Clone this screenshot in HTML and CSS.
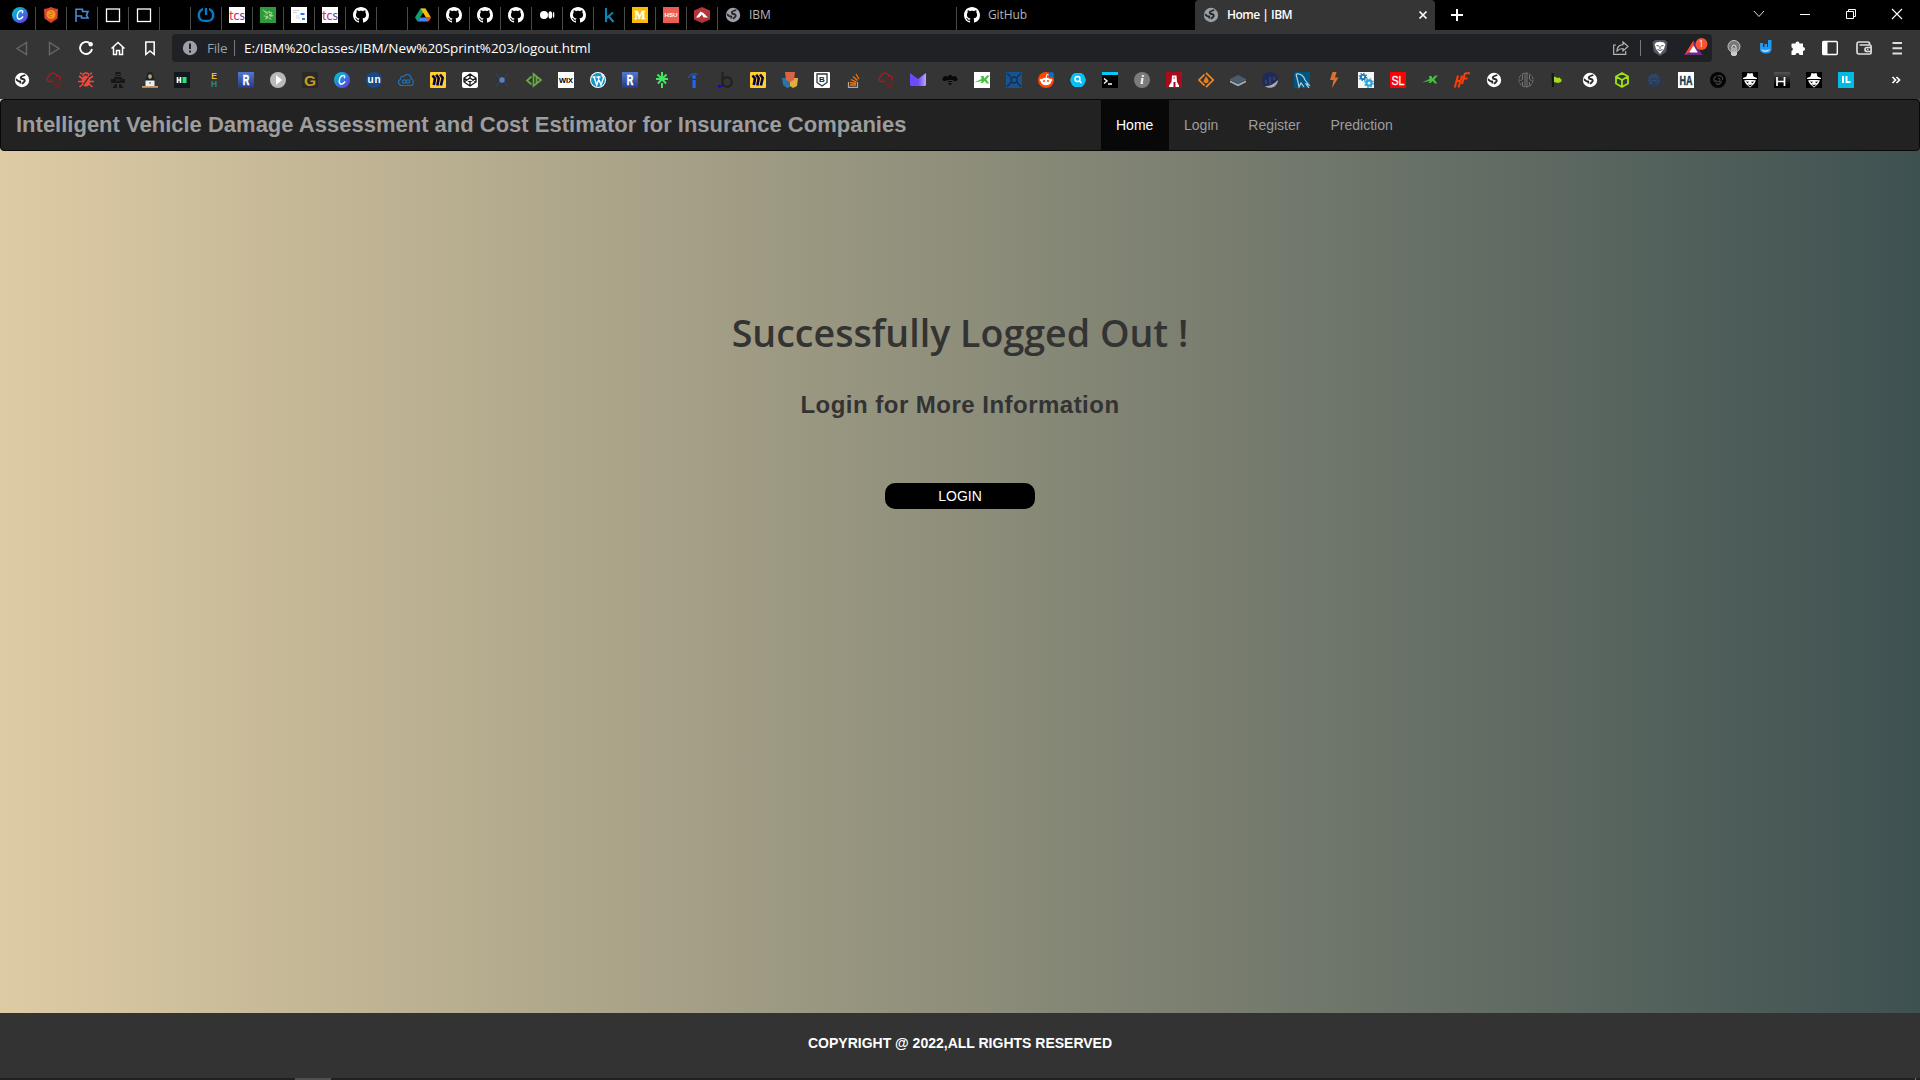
FILE: index.html
```html
<!DOCTYPE html>
<html lang="en">
<head>
<meta charset="utf-8">
<title>Home | IBM</title>
<link rel="stylesheet" href="styles.css">
</head>
<body>
<svg class="defs" aria-hidden="true">
  <defs>
    <linearGradient id="canva-g" x1="0" y1="0" x2="1" y2="1"><stop offset="0.1" stop-color="#00c4cc"/><stop offset="0.5" stop-color="#2b7de0"/><stop offset="1" stop-color="#7d2ae8"/></linearGradient>
    <linearGradient id="purple-g" x1="0" y1="0" x2="1" y2="0"><stop offset="0.5" stop-color="#6d4aff"/><stop offset="1" stop-color="#b9a6ff"/></linearGradient>
    <linearGradient id="h-g" x1="0" y1="0" x2="0" y2="1"><stop offset="0" stop-color="#555"/><stop offset="0.8" stop-color="#000"/></linearGradient>
    <linearGradient id="r-g" x1="0" y1="0" x2="0" y2="1"><stop offset="0" stop-color="#5277d0"/><stop offset="1" stop-color="#263a80"/></linearGradient>
    <symbol id="canva" viewBox="0 0 16 16"><circle cx="8" cy="8" r="8" fill="url(#canva-g)"/><path d="M10.400 5.600c.8-1.400-.2-2.400-1.500-2-2 .5-3.600 3-3.600 5.400 0 2.300 1 3.300 2.400 3.100 1.300-.1 2.400-1.100 3-2.200" fill="none" stroke="#fff" stroke-width="1.500" stroke-linecap="round"/></symbol>
    <symbol id="github" viewBox="0 0 16 16"><path fill="#fff" d="M8 0C3.580 0 0 3.580 0 8c0 3.540 2.290 6.530 5.470 7.590.4.070.55-.17.55-.38 0-.19-.01-.82-.01-1.490-2.010.37-2.530-.49-2.690-.94-.09-.23-.48-.94-.82-1.130-.28-.15-.68-.52-.01-.53.63-.01 1.080.58 1.230.82.72 1.210 1.870.87 2.330.66.070-.52.28-.87.51-1.070-1.780-.2-3.640-.89-3.640-3.950 0-.87.31-1.590.82-2.150-.08-.2-.36-1.020.08-2.120 0 0 .67-.21 2.200.82.64-.18 1.320-.27 2-.27s1.360.09 2 .27c1.530-1.040 2.200-.82 2.200-.82.44 1.100.16 1.920.08 2.120.51.56.82 1.270.82 2.150 0 3.070-1.870 3.750-3.650 3.950.29.25.54.73.54 1.480 0 1.070-.01 1.930-.01 2.200 0 .21.15.46.55.38A8.010 8.010 0 0 0 16 8c0-4.420-3.580-8-8-8z"/></symbol>
    <symbol id="globe" viewBox="0 0 16 16"><circle cx="8" cy="8" r="7.200" fill="currentColor"/><path d="M11.300 3 8.500 4C6 4.800 6.200 6.600 8.500 7s3 1.800 1.500 3l-2 1.800M2 7.300l2.300 1.900 2 .3v2" class="cut" fill="none" stroke-width="1.800"/></symbol>
    <symbol id="square" viewBox="0 0 16 16"><rect x="1.500" y="2" width="13" height="12.500" fill="none" stroke="#fff" stroke-width="1.300"/></symbol>
    <symbol id="tcs" viewBox="0 0 16 16"><path d="M0 0h16v16H0z" fill="#fff"/><text x="0" y="12.500" font-size="13" font-weight="400" textLength="16" lengthAdjust="spacingAndGlyphs" class="lato"><tspan fill="#e5352b">t</tspan><tspan fill="#c1268e">c</tspan><tspan fill="#713f98">s</tspan></text></symbol>
    <symbol id="redcloud" viewBox="0 0 16 16"><path d="M7 9.500H3A2.600 2.600 0 0 1 3 4.500C4 .5 9.500-.3 11 4c3-.5 4.500 2.500 2.500 4" fill="none" stroke="#c01217" stroke-width="1.300"/><path d="M8.500 7h3m1 2h2.500M7.500 12h3m1 0h3.500M10 14.500h4" fill="none" stroke="#8c1b1e"/></symbol>
    <symbol id="rbook" viewBox="0 0 16 16"><path d="M0 0h16v16H0z" fill="url(#r-g)"/><text x="8" y="13" font-size="14" font-weight="700" fill="#fff" stroke="#fff" stroke-width=".6" text-anchor="middle" textLength="6.500" lengthAdjust="spacingAndGlyphs">R</text></symbol>
    <symbol id="miro" viewBox="0 0 16 16"><rect width="16" height="16" rx="1" fill="#ffd02f"/><path d="M2.500 3.500 5 6.500 3.800 13M6.200 2.700 8.700 6.300 7.300 13.500M10 2.500 12.700 5.800 10.900 13.500" fill="none" stroke="#050038" stroke-width="2.600"/></symbol>
    <symbol id="spy" viewBox="0 0 16 16"><path d="M0 0h16v16H0z" fill="#000"/><path d="M5.500 1 8 1.500 10.500 1l1 3.500L15 6v1H1V6l3.500-1.500z" fill="#fff"/><path d="M2 8.500 5 8h6l3 .5-2 3.500-4 3.500L4 12z" fill="#fff"/><path d="m4 9.500 3 .3-1.300 1.400zm8 0-3 .3 1.300 1.400zM5.500 12.300 8 13l2.500-.7L8 14.500z" fill="#000"/></symbol>
    <symbol id="kfig" viewBox="0 0 16 16"><path d="M0 10.500 7.500 7l-.5-3h2.700l.5 2.500L13 3.500h2.800l-3.500 4 3 4h-2.600l-2-2.500-2 2H6.500L8 9z" fill="currentColor"/></symbol>
  </defs>
</svg>

<header class="browser">
  <div class="tabs">
    <div class="pin"><svg><use href="#canva"/></svg></div>
    <div class="pin"><svg viewBox="0 0 16 16"><path d="m8 0 3 1.200L15 2l-.5 9.500L8 16l-6.500-4.500L1 2l4-.8z" fill="#d9442d"/><circle cx="8" cy="7.500" r="4.500" fill="#f4971e"/><path d="M7 4.500c3 0 3 3 0 3s-1 3 2 2.500" fill="none" stroke="#d9652d"/></svg></div>
    <div class="pin"><svg viewBox="0 0 16 16"><path d="M2 15V2.200h6.500V4.500H14L12.500 8l1.500 3H7.500V9H2" fill="none" stroke="#478bdc" stroke-width="1.600"/></svg></div>
    <div class="pin"><svg><use href="#square"/></svg></div>
    <div class="pin"><svg><use href="#square"/></svg></div>
    <div class="pin"></div>
    <div class="pin"><svg viewBox="0 0 16 16"><path d="M5 2.200H4.500A6.500 6.500 0 0 0 3 13c1.500 1.300 8.500 1.300 10 0a6.500 6.500 0 0 0-1.500-10.800H11M8 1v7" fill="none" stroke="#0878c9" stroke-width="2.300"/></svg></div>
    <div class="pin"><svg><use href="#tcs"/></svg></div>
    <div class="pin"><svg viewBox="0 0 16 16"><path d="M0 0h16v16H0z" fill="#2e9a38"/><path d="m2 2 5 3 2-1 4 2-2 1 3 2-4 1 2 3-4-2-3 2 1-3-3-1 3-1z" fill="#a4d59c"/><path d="m3 4 8 7M5 9l6-3M8 5l1 6" stroke="#2e9a38"/></svg></div>
    <div class="pin"><svg viewBox="0 0 16 16"><path d="M0 0h16v16H0z" fill="#fff"/><path d="M2 3.500h6M2 5.500h4M5 11h4M5 9h3" stroke="#ccd3df"/><path d="M9.500 7h4M11 12h3" stroke="#2676ee" stroke-width="2"/></svg></div>
    <div class="pin"><svg><use href="#tcs"/></svg></div>
    <div class="pin"><svg><use href="#github"/></svg></div>
    <div class="pin"></div>
    <div class="pin"><svg viewBox="0 0 16 16"><path d="M5.500 1.500h5L8 6 2.500 14.500 0 10.500z" fill="#12a160"/><path d="M5.500 1.500h5l5.500 9h-5z" fill="#fbbc05"/><path d="M5 10.500h11l-2.500 4h-11z" fill="#4285f4"/><path d="M11 10.500h5l-2.500 4z" fill="#ea4335"/></svg></div>
    <div class="pin"><svg><use href="#github"/></svg></div>
    <div class="pin"><svg><use href="#github"/></svg></div>
    <div class="pin"><svg><use href="#github"/></svg></div>
    <div class="pin"><svg viewBox="0 0 16 16"><circle cx="5" cy="8" r="4" fill="#fff"/><ellipse cx="11.300" cy="8" rx="1.900" ry="3.800" fill="#fff"/><ellipse cx="14.600" cy="8" rx=".7" ry="3.300" fill="#fff"/></svg></div>
    <div class="pin"><svg><use href="#github"/></svg></div>
    <div class="pin"><svg viewBox="0 0 16 16"><path d="M5 1v14M12 5.500 5.500 11M7.500 9l5 6" fill="none" stroke="#0a86b4" stroke-width="2.100"/></svg></div>
    <div class="pin"><svg viewBox="0 0 16 16"><path d="M0 0h16v16H0z" fill="#fbbc04"/><text x="8" y="12.300" font-size="13" font-weight="700" fill="#fff" stroke="#fff" stroke-width=".4" text-anchor="middle" textLength="11" lengthAdjust="spacingAndGlyphs" class="serif">M</text></svg></div>
    <div class="pin"><svg viewBox="0 0 16 16"><path d="M0 0h16v16H0z" fill="#ec5e55"/><text x="8" y="10.300" font-size="6.200" font-weight="700" fill="#fff" text-anchor="middle" textLength="13">HSU</text></svg></div>
    <div class="pin"><svg viewBox="0 0 16 16"><path d="m8 0 8 3.500v9L8 16l-8-3.500v-9z" fill="#b4343a"/><path d="m2 10.500 4.500-6 3 1.500 4.500 4.500H9.500L8 7.500l-3 3z" fill="#fff"/></svg></div>
    <div class="tab"><svg class="fav grey"><use href="#globe"/></svg><span>IBM</span></div>
    <div class="tab github-tab"><svg class="fav"><use href="#github"/></svg><span>GitHub</span></div>
    <div class="tab active"><svg class="fav grey"><use href="#globe"/></svg><span>Home | IBM</span><svg class="close" viewBox="0 0 10 10"><path d="m1.500 1.500 7 7m0-7-7 7" stroke="#fff" stroke-width="1.700"/></svg></div>
    <svg class="plus" viewBox="0 0 12 12"><path d="M6 0v12M0 6h12" stroke="#fff" stroke-width="2"/></svg>
    <div class="window">
      <svg viewBox="0 0 46 30"><path d="m18 11 5 5.500 5-5.500" fill="none" stroke="#ddd"/></svg>
      <svg viewBox="0 0 46 30"><path d="M18 14.500h10" stroke="#fff"/></svg>
      <svg viewBox="0 0 46 30"><path d="M18.500 11.500h7v7h-7zM20.500 11V9.500h7v7H26" fill="none" stroke="#fff"/></svg>
      <svg viewBox="0 0 46 30"><path d="m18 9 10 10m0-10L18 19" stroke="#fff" stroke-width="1.100"/></svg>
    </div>
  </div>

  <div class="toolbar">
    <div class="nav-buttons">
      <svg viewBox="0 0 16 16"><path d="M12.500 2.500v12L3 8.500z" fill="none" stroke="#66676d" stroke-width="1.400"/></svg>
      <svg viewBox="0 0 16 16"><path d="M3.500 2.500v12l9.500-6z" fill="none" stroke="#66676d" stroke-width="1.400"/></svg>
      <svg viewBox="0 0 16 16"><path d="M11.500 3A6 6 0 1 0 14 9" fill="none" stroke="#fff" stroke-width="1.900"/><circle cx="12.700" cy="4.200" r="2.200" fill="#fff"/></svg>
      <svg viewBox="0 0 16 16"><path d="m1.500 8.500 6.500-6 6.500 6M3.500 7v7.500h3v-4h3v4h3V7" fill="none" stroke="#fff" stroke-width="1.500"/></svg>
      <svg viewBox="0 0 16 16"><path d="M3.800 2h8.400v12.500L8 11l-4.200 3.500z" fill="none" stroke="#fff" stroke-width="1.500"/></svg>
    </div>
    <div class="address">
      <svg class="info" viewBox="0 0 16 16"><circle cx="8" cy="8" r="7.200" fill="#9aa0a6"/><path d="M8 3.500v5.500M8 10.500v2" stroke="#202124" stroke-width="2"/></svg>
      <span class="scheme">File</span><span class="bar"></span>
      <span class="url">E:/IBM%20classes/IBM/New%20Sprint%203/logout.html</span>
      <svg class="share" viewBox="0 0 16 16"><path d="M3 5H.7v9.300h12V11M10 2l5 4.500-5 4.500V8.500c-3 0-4.500.8-6 2.500 0-4 2.500-6 6-6.300z" fill="none" stroke="#b5b6b8" stroke-width="1.200"/></svg>
      <span class="bar"></span>
      <svg class="lion" viewBox="0 0 16 16"><path d="M3.500 0h9L15.500 2l-1.300 10L8 16l-6.200-4L.5 2z" fill="#565665"/><path d="m4 2.500 4-.7 4 .7 1.300 2-1.300 4.500L8 14 4 9 2.700 4.500z" fill="#fff"/><path d="M4.500 5.500 7 6M11.500 5.500 9 6M8 6v3M5.500 9.500 8 10.500l2.500-1" fill="none" stroke="#565665"/></svg>
      <svg class="bat" viewBox="0 0 24 18"><path d="M9.500 2.500 18.500 17H.5z" fill="#6a2b87"/><path d="M9.500 2.500V8L5.500 14 .5 17z" fill="#ff4724"/><path d="m9.500 7.500 4.300 7h-8.600z" fill="#fff"/><circle cx="17.500" cy="6" r="6" fill="#fb542b"/><text x="17.300" y="9" font-size="8.500" fill="#fff" text-anchor="middle">1</text></svg>
    </div>
    <div class="extensions">
      <svg viewBox="0 0 16 16"><circle cx="8" cy="6.500" r="6" fill="#777" stroke="#c4c4c4"/><path d="M6 12V7a2 2 0 0 1 4 0v5M8 8v4" fill="none" stroke="#ddd"/><path d="M5 12h6v2.500L9.500 16h-3L5 14.500z" fill="#ccc"/></svg>
      <svg viewBox="0 0 16 16"><path d="M2 3h3v4h1.500V4H9v3h1V0h3.500v9c0 3-2 4.500-5.500 4.500S2 12 2 9z" fill="#2497ef"/><path d="M3 9c2 1.500 7 1.500 9 0-1 4-8 4-9 0z" fill="#a5ddff"/></svg>
      <svg viewBox="0 0 16 16"><path d="M2 3.500h3.500a2 2 0 1 1 4 0H13V7a2 2 0 1 1 0 4v4H9.500a2 2 0 0 0-4 0H1.500v-4a2 2 0 0 0 0-3.800V4z" fill="#fff"/></svg>
      <svg viewBox="0 0 16 16"><rect x=".7" y="1.500" width="14.600" height="13" rx="1" fill="none" stroke="#fff" stroke-width="1.400"/><path d="M1 2h4.500v12H1z" fill="#fff"/></svg>
      <svg class="wallet" viewBox="0 0 16 16"><path d="M13.500 5V3.200C13.500 2.500 13 2 12 2H2.500A1.700 1.700 0 0 0 1 3.700v8.600A1.700 1.700 0 0 0 2.500 14h11.300a1.300 1.300 0 0 0 1.300-1.300V6.500A1.300 1.300 0 0 0 13.800 5H3.500M15 7.500h-4a2 2 0 0 0 0 4h4" fill="none" stroke="#ddd" stroke-width="1.700"/><path d="M11 9.500h1.500" stroke="#ddd" stroke-width="1.500"/></svg>
      <svg viewBox="0 0 16 16"><path d="M3.500 3h9.500M3.500 8.200h9.500M3.500 13.500h9.500" stroke="#ddd" stroke-width="1.900"/></svg>
    </div>
  </div>

  <div class="bookmarks">
    <svg class="white"><use href="#globe"/></svg>
    <svg><use href="#redcloud"/></svg>
    <svg viewBox="0 0 16 16"><ellipse cx="8" cy="9" rx="4.300" ry="5.500" fill="#f0483e"/><path d="M5 4a3 3 0 0 1 6 0M0 9.500h16M1 4l4 3M15 4l-4 3M1.500 15l3.500-3M14.500 15 11 12M4 2 2 1M12 2l2-1" fill="none" stroke="#f0483e" stroke-width="1.600"/><path d="m5.500 12.500 5-7" stroke="#353535" stroke-width="1.300"/></svg>
    <svg viewBox="0 0 16 16"><path d="M5.500 0h5v4h-5zM4 5h8v6H4zM1 7h3v4H1zM12 7h3v4h-3zM5 12h2v4H2.500zM9 12h2l2.500 4H9z" fill="#171717"/><path d="M6 2.500h4M5.500 8h5M0 12h3m10 0h3" stroke="#333"/></svg>
    <svg viewBox="0 0 16 16"><path d="M5 3c0-4 6-4 6 0l2 6H3z" fill="#11252f"/><ellipse cx="8" cy="4.500" rx="1.800" ry="2.300" fill="#dc9d70"/><path d="M3.500 8.500h9V14h-9z" fill="#eee"/><path d="M8 10v2" stroke="#456"/><path d="M0 14h16v1.800H0z" fill="#c9986c"/></svg>
    <svg viewBox="0 0 16 16"><path d="M0 0h16v16H0z" fill="#111820"/><path d="M3.500 5v6m3-6v6m-3-3h3" stroke="#fff" stroke-width="1.700"/><path d="M8.500 5h4v6h-4z" fill="#1ded75"/></svg>
    <svg viewBox="0 0 16 16"><text x="8" y="6.800" font-size="8.500" font-weight="700" fill="#edbf28" text-anchor="middle">E</text><text x="8" y="15.300" font-size="8.500" font-weight="700" fill="#238995" text-anchor="middle">H</text></svg>
    <svg><use href="#rbook"/></svg>
    <svg viewBox="0 0 16 16"><circle cx="8" cy="8" r="8" fill="#b9b9bb"/><path d="m6 3 6 5-6 5z" fill="#fff"/></svg>
    <svg viewBox="0 0 16 16"><rect width="16" height="16" rx="2" fill="#292929"/><text x="8" y="13.500" font-size="15.500" font-weight="700" fill="#c9991d" text-anchor="middle">G</text></svg>
    <svg><use href="#canva"/></svg>
    <svg viewBox="0 0 16 16"><circle cx="8" cy="8" r="8" fill="#184a86"/><text x="8" y="10.500" font-size="10" font-weight="700" fill="#fff" text-anchor="middle" textLength="13">un</text></svg>
    <svg viewBox="0 0 16 16"><path d="M4 13.500C0 13.500-.5 8.500 2.500 7.500 2 4.500 5 3.500 6 4.500 9 .5 13.500 3 13 7c3 .5 3.500 6.500-1 6.500H4z" fill="none" stroke="#236fb4" stroke-width="1.200"/><ellipse cx="6.200" cy="9.500" rx="1.800" ry="1.600" fill="none" stroke="#236fb4" stroke-width="1.200"/><ellipse cx="10" cy="9.500" rx="1.800" ry="1.600" fill="none" stroke="#236fb4" stroke-width="1.200"/></svg>
    <svg><use href="#miro"/></svg>
    <svg viewBox="0 0 16 16"><rect width="16" height="16" rx="2" fill="#fff"/><path d="m8 2 6 4v4l-6 4-6-4V6zM2 6l6 4 6-4M2 10l6-4 6 4M8 2v4m0 4v4" fill="none" stroke="#15171b" stroke-width="1.300"/></svg>
    <svg viewBox="0 0 16 16"><path d="m2 2 4 4m8-4-4 4M2 14l4-4m8 4-4-4" stroke="#364055" stroke-width="1.500"/><circle cx="8" cy="8" r="2.700" fill="#5482ca"/></svg>
    <svg viewBox="0 0 16 16"><path d="m5.500 4.500-4.500 4 4.500 4M7.500 2l7.500 6-7.500 6z M10.500 5v6" fill="none" stroke="#6aaa47" stroke-width="1.700"/></svg>
    <svg viewBox="0 0 16 16"><path d="M0 0h16v16H0z" fill="#fff"/><text x="8" y="10.700" font-size="7.500" font-weight="700" text-anchor="middle" textLength="14">WIX</text></svg>
    <svg viewBox="0 0 16 16"><circle cx="8" cy="8" r="8" fill="#fff"/><circle cx="8" cy="8" r="7" fill="#1595c7"/><path d="M2.500 5h3m1 0h4M4 5l2.700 8L9 6.500M8 5l3 8 2.500-7c0-2-2-2-1.500-4" fill="none" stroke="#fff" stroke-width="1.400"/></svg>
    <svg><use href="#rbook"/></svg>
    <svg viewBox="0 0 16 16"><path d="M8 0v9M8 11v5M2 7h12M3.500 2.500 8 7l4.500-4.500M4 11.500 8 7l4 4.500" fill="none" stroke="#43e660" stroke-width="2"/></svg>
    <svg viewBox="0 0 16 16"><path d="M2.500 6C4 2 8 .5 11.500 2.500" fill="none" stroke="#1a55dc" stroke-width="1.300"/><circle cx="8" cy="5" r="2" fill="#2164f3"/><path d="M6.500 8h3.200v8H6.500z" fill="#2164f3"/></svg>
    <svg viewBox="0 0 16 16"><path d="M4.500 0v15M4.500 8.500a4.800 4.800 0 1 1 0 3" fill="none" stroke="#202020" stroke-width="2"/><circle cx="1.500" cy="14.300" r="1.500" fill="#0000ff"/></svg>
    <svg><use href="#miro"/></svg>
    <svg viewBox="0 0 16 16"><path d="M0 6h8v9l-3 1-4-3z" fill="#2975a8"/><path d="M8 6h8l-1 8-4 2-3-2z" fill="#e2ad3a"/><path d="M3 0h10l-1 8-4 2-4-2z" fill="#d76444"/></svg>
    <svg viewBox="0 0 16 16"><rect width="16" height="16" rx="1" fill="#fff"/><path d="M3 2h10v8.500L8 14l-5-3.500z" fill="none" stroke="#333" stroke-width="1.300"/><text x="8" y="10.300" font-size="8" font-weight="700" fill="#222" text-anchor="middle">B</text></svg>
    <svg viewBox="0 0 16 16"><path d="M2.500 10v5.300h9V10" fill="none" stroke="#aaa" stroke-width="1.200"/><path d="M4 13h6M4 10.500l6 1M5 7.500l5.500 2.600M7 4.500l4.500 4M10 2l3 5" stroke="#ef750f" stroke-width="1.300"/></svg>
    <svg><use href="#redcloud"/></svg>
    <svg viewBox="0 0 16 16"><path d="m0 1 8 6 8-6v12l-1 1H1l-1-1z" fill="url(#purple-g)"/></svg>
    <svg viewBox="0 0 16 16"><path d="M6.500 6C4 2 0 5 .5 8c1 1.500 4 1 6 0zM9.500 6c2.500-4 6.500-1 6 2-1 1.500-4 1-6 0z" fill="#080808"/><path d="M6.500 3h3l1 3-.5 5-2 2.500L6 11 5.500 6z" fill="#080808"/><path d="M5 8.500h6M5 10.500h6" stroke="#353535"/></svg>
    <svg class="kgreen" viewBox="0 0 16 16"><path d="M0 0h16v16H0z" fill="#fff"/><use href="#kfig"/></svg>
    <svg viewBox="0 0 16 16"><path d="M0 0h16v16H0z" fill="#155491"/><path d="m1 1 4.500 5M15 1l-4.500 5M1 15l4-5m10 5-4-5" stroke="#17304c" stroke-width="1.300"/><circle cx="8" cy="8" r="3" fill="none" stroke="#17304c" stroke-width="1.400"/></svg>
    <svg viewBox="0 0 16 16"><circle cx="8" cy="8" r="8" fill="#ff4500"/><ellipse cx="8" cy="9.500" rx="5.200" ry="3.800" fill="#fff"/><circle cx="3" cy="8" r="1.300" fill="#fff"/><circle cx="13" cy="8" r="1.300" fill="#fff"/><path d="m8 6 .8-3.500 2.200.5" fill="none" stroke="#fff"/><circle cx="6" cy="9" r="1" fill="#ff4500"/><circle cx="10" cy="9" r="1" fill="#ff4500"/><circle cx="13.300" cy="2.700" r="2.700" fill="#0870c9"/></svg>
    <svg viewBox="0 0 16 16"><path d="M4.500 1h7L14 3l2 5-2 5-2.500 2h-7L2 13 0 8l2-5z" fill="#08c0f8"/><circle cx="7.500" cy="7" r="2.500" fill="none" stroke="#fff" stroke-width="1.400"/><path d="m9.300 8.800 2.200 2.200" stroke="#fff" stroke-width="1.600"/></svg>
    <svg viewBox="0 0 16 16"><path d="M0 0h16v16H0z" fill="#000"/><path d="M0 0h16v3H0z" fill="#00cafc"/><path d="m2 6.500 3 2.500-3 2.500M6 12h4" fill="none" stroke="#fff" stroke-width="1.400"/></svg>
    <svg viewBox="0 0 16 16"><circle cx="8" cy="8" r="8" fill="#7b7b7b"/><text x="8" y="12.300" font-size="13" font-weight="700" font-style="italic" fill="#fff" text-anchor="middle" class="serif">i</text></svg>
    <svg viewBox="0 0 16 16"><path d="M0 0h16v16H0z" fill="#a90d1c"/><path d="M6 3.500h4.500l.5 6.500 2 3.500v1.500H9.500V10h-2v5H3v-1.500L5.500 10z" fill="#fff"/><path d="M7.500 6h1.500" stroke="#a90d1c"/></svg>
    <svg viewBox="0 0 16 16"><path d="M6.500 2.500 1 8l5.500 5.500M8 .8 15.200 8 8 15.200" fill="none" stroke="#f28b22" stroke-width="1.700"/><path d="m8 4 2.500 4c1 4-5 4-5 1z" fill="#e57c18"/></svg>
    <svg viewBox="0 0 16 16"><path d="m0 8.500 8 3.800 8-3.800v1.800l-8 4-8-4z" fill="#aab2b9"/><path d="m0 7 8-4 8 4v1l-8 4-8-4z" fill="#485c6c"/></svg>
    <svg viewBox="0 0 16 16"><circle cx="8" cy="8" r="8" fill="#202c58"/><path d="M4 8v4M8 5v7M12 5v3" stroke="#363f6c" stroke-width="2"/><path d="M3 14.200C8 14 12 12 16 8c-.3 7-8 10-13 6.200z" fill="#aaa"/></svg>
    <svg viewBox="0 0 16 16"><rect width="16" height="16" rx="1" fill="#005682"/><path d="M2 2c6-1 8 3 9 6l4 5-3-1 3 4M2 2l2 8 1 5 2-4 3 4" fill="none" stroke="#b5d0dc" stroke-width="1.200"/></svg>
    <svg viewBox="0 0 16 16"><path d="M6.500 0h4L9 5.500h3.500L6 16l1.500-8H4z" fill="#db702f"/></svg>
    <svg viewBox="0 0 16 16"><path d="M0 0h16v16H0z" fill="#f5f5f5"/><circle cx="5" cy="5" r="2.200" fill="none" stroke="#1677b9" stroke-width="1.800"/><circle cx="5" cy="5" r="3.600" fill="none" stroke="#1677b9" stroke-width="1.200" stroke-dasharray="1.400 1.400"/><circle cx="11" cy="11" r="2.600" fill="none" stroke="#26a3dd" stroke-width="2.200"/><circle cx="11" cy="11" r="4.300" fill="none" stroke="#26a3dd" stroke-width="1.200" stroke-dasharray="1.700 1.700"/></svg>
    <svg viewBox="0 0 16 16"><path d="M0 0h16v16H0z" fill="#f00"/><text x="8" y="12.500" font-size="13" fill="#fff" stroke="#fff" stroke-width=".3" text-anchor="middle" textLength="13" lengthAdjust="spacingAndGlyphs">SL</text></svg>
    <svg class="kgreen"><use href="#kfig"/></svg>
    <svg viewBox="0 0 16 16"><path d="M4 3.500.8 15.500M8 3.500 4.500 15.500M3 9h4M11 1 8 12M11 1.200h5M9.500 6.500h4" fill="none" stroke="#ff3d05" stroke-width="2"/></svg>
    <svg class="white"><use href="#globe"/></svg>
    <svg viewBox="0 0 16 16"><circle cx="8" cy="8" r="7" fill="none" stroke="#777" stroke-dasharray="3 1"/><path d="M7 1v14M9 1v14M4.500 3v4l-2 2M4.500 10v4M11.500 3v4l2 2M11.500 10v4" fill="none" stroke="#777"/></svg>
    <svg viewBox="0 0 16 16"><path d="m2.500 1 .5 14" stroke="#101510" stroke-width="2"/><path d="M4 4.500 8 6l5-1.500-2 5.500-3 1-4-1z" fill="#a3db1f"/><path d="m10 5 4-.5-3 3.500z" fill="#20320b"/></svg>
    <svg class="white"><use href="#globe"/></svg>
    <svg viewBox="0 0 16 16"><path d="m8 1 6 3.500v7L8 15l-6-3.500v-7zM2 4.500 8 8l6-3.500M8 8v7" fill="none" stroke="#9ee216" stroke-width="1.800"/></svg>
    <svg viewBox="0 0 16 16"><circle cx="8" cy="8" r="6.700" fill="#293c58" stroke="#263b60" stroke-dasharray="1 1"/><path d="M3 6c2-4 8-4 10 0M3 9c2-5 8-5 10 0M4 12c1-5 7-5 8 0" fill="none" stroke="#3f5880" stroke-dasharray="2 1"/></svg>
    <svg viewBox="0 0 16 16"><path d="M0 0h16v16H0z" fill="#fff"/><text x="8" y="12.700" font-size="13" font-weight="700" fill="#123e50" stroke="#123e50" stroke-width=".4" text-anchor="middle" textLength="13" lengthAdjust="spacingAndGlyphs">HA</text></svg>
    <svg viewBox="0 0 16 16"><circle cx="8" cy="8" r="8" fill="#050505"/><path d="M7.500 4c3-1.500 6 1.500 5 4M11.500 9c0 3-4 4.500-6 2M5.500 10C3 8.500 3.500 5 6.500 4M8 6a2 2 0 1 1-2 2" fill="none" stroke="#444" stroke-width="1.200"/></svg>
    <svg><use href="#spy"/></svg>
    <svg viewBox="0 0 16 16"><path d="M0 0h16v16H0z" fill="url(#h-g)"/><path d="M3 5v9M10.500 5v9M3 9.500h7.500" stroke="#fff" stroke-width="1.700"/></svg>
    <svg><use href="#spy"/></svg>
    <svg viewBox="0 0 16 16"><path d="M0 0h16v16H0z" fill="#00bce4"/><path d="M5 4v7M8.500 4v6h4" fill="none" stroke="#fff" stroke-width="2"/></svg>
    <svg class="more" viewBox="0 0 16 16"><path d="m4.500 5 3 3-3 3M8.500 5l3 3-3 3" fill="none" stroke="#fff" stroke-width="1.700"/></svg>
  </div>
</header>

<div class="page">
  <nav class="navbar">
    <div class="brand">Intelligent Vehicle Damage Assessment and Cost Estimator for Insurance Companies</div>
    <a class="link current">Home</a><a class="link">Login</a><a class="link">Register</a><a class="link">Prediction</a>
  </nav>
  <main class="message">
    <h1>Successfully Logged Out !</h1>
    <h3>Login for More Information</h3>
    <button class="login">LOGIN</button>
  </main>
</div>
<footer class="footer">COPYRIGHT @ 2022,ALL RIGHTS RESERVED</footer>
<div class="taskbar"><span class="running"></span><span class="peek"></span></div>
</body>
</html>
```
FILE: styles.css
```css
* { box-sizing: border-box; }
body {
  margin: 0;
  width: 1920px;
  height: 1080px;
  overflow: hidden;
  display: flex;
  flex-direction: column;
  font-family: "Liberation Sans", Arial, sans-serif;
}
svg { display: block; flex: none; width: 16px; height: 16px; overflow: visible; }
.defs { position: absolute; width: 0; height: 0; }
.serif { font-family: "Liberation Serif", serif; }
.lato { font-family: Lato, sans-serif; }
.grey { color: #9aa0a6; }
.white { color: #fff; }
.kgreen { color: #49bd3f; }
.cut { stroke: #252525; }

.browser { height: 99px; background: #353535; flex: none; }
.tabs { display: flex; height: 30px; padding-left: 5px; background: #000; }
.pin { width: 31px; height: 23px; margin-top: 7px; padding-left: 7px; border-right: 1px solid #4a4a4a; }
.tab {
  display: flex;
  align-items: center;
  width: 239px;
  height: 23px;
  margin-top: 7px;
  padding: 0 0 7px 7px;
  border-right: 1px solid #4a4a4a;
  font: 12px "Open Sans", sans-serif;
  letter-spacing: -0.100px;
  color: #b4b4b4;
}
.tab span { margin: -1px 0 0 8px; }
.github-tab { width: 238px; border: 0; }
.active {
  width: 240px;
  height: 30px;
  margin: 0;
  padding: 0 7px 0 8px;
  border: 0;
  border-radius: 4px 4px 0 0;
  background: #353535;
  color: #fff;
  font-weight: 600;
  letter-spacing: -0.500px;
}
.close { width: 10px; height: 10px; margin-left: auto; }
.plus { width: 12px; height: 12px; margin: 9px 0 0 16px; }
.window { display: flex; margin-left: auto; }
.window svg { width: 46px; height: 30px; }

.toolbar { display: flex; height: 36px; padding-top: 4px; }
.nav-buttons { display: flex; gap: 16px; width: 172px; padding: 6px 0 0 14px; }
.address { display: flex; align-items: center; width: 1540px; height: 28px; padding-left: 10px; border-radius: 4px; background: #202124; font-family: "Open Sans", sans-serif; font-size: 13.500px; }
.scheme { width: 27px; margin-left: 9px; color: #9aa0a6; letter-spacing: -0.300px; }
.bar { width: 1px; height: 16px; background: #77797c; }
.url { margin-left: 9px; color: #fff; letter-spacing: -0.080px; white-space: nowrap; }
.share { margin-left: auto; }
.share + .bar { margin: 0 11px 0 11px; }
.bat { width: 24px; height: 18px; margin: -3px 4px 0 16px; }
.extensions { display: flex; gap: 16px; padding: 6px 0 0 14px; }
.wallet { margin: 0 1px 0 2px; }
.bookmarks { display: flex; gap: 16px; padding: 6px 14px; }
.bookmarks .more { margin-left: 18px; }

.page { height: 914px; background: linear-gradient(to right, #decba4, #3e5151); }
.navbar { display: flex; height: 52px; border: 1px solid #080808; border-radius: 4px; background: #222; }
.brand { width: 1100px; padding-left: 15px; font-size: 22px; font-weight: 700; line-height: 49px; color: #9d9d9d; white-space: nowrap; }
.link { padding: 0 15px; font-size: 14px; line-height: 51px; color: #9d9d9d; }
.current { padding-right: 15.700px; color: #fff; background: #080808; }

.message { display: flex; flex-direction: column; align-items: center; padding-top: 155px; color: #333; }
h1 { margin: 0; font: 600 37.600px/54px "Open Sans", sans-serif; white-space: nowrap; }
h3 { margin: 31px 0 0; font-size: 24px; line-height: 28px; letter-spacing: 0.480px; }
.login { width: 150px; height: 26px; margin-top: 64px; padding: 0; border: 0; border-radius: 10px; background: #000; color: #fff; font: 14px "Liberation Sans", Arial, sans-serif; }

.footer { height: 65px; background: #333; color: #fff; font-size: 14px; font-weight: 700; line-height: 61px; text-align: center; }
.taskbar { display: flex; justify-content: space-between; height: 2px; padding: 0 4px 0 295px; background: #202020; }
.running { width: 36px; background: #505050; }
.peek { width: 1px; background: #777; }
```
